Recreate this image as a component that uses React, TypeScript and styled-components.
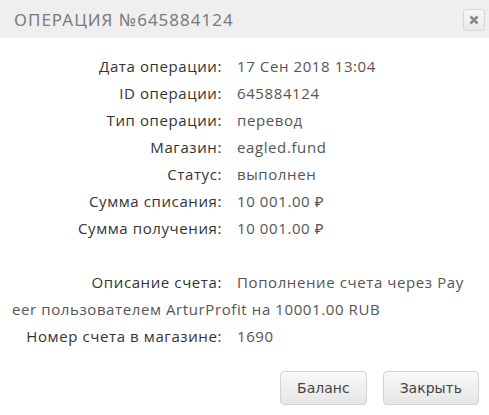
import React from "react";
import styled, { createGlobalStyle } from "styled-components";

const Global = createGlobalStyle`
  html, body { margin: 0; padding: 0; background: #fff; }
  body { font-family: "Open Sans", "Noto Sans", sans-serif; }
`;

const Dialog = styled.div`
  width: 489px;
  height: 415px;
  background: #fff;
  display: flex;
  flex-direction: column;
`;

const Header = styled.div`
  height: 38px;
  background: #efefef;
  display: flex;
  align-items: center;
  justify-content: space-between;
  padding: 0 4px 0 14px;
  box-sizing: border-box;
`;

const Title = styled.div`
  font-family: "Noto Sans", "Open Sans", sans-serif;
  font-size: 17px;
  letter-spacing: 1px;
  color: #7b7b7b;
  text-transform: uppercase;
`;

const CloseBtn = styled.button`
  width: 22px;
  height: 22px;
  margin-top: 1px;
  border: 1px solid #d6d6d6;
  border-radius: 3px;
  background: linear-gradient(#f7f7f7, #e9e9e9);
  display: flex;
  align-items: center;
  justify-content: center;
  padding: 0;
`;

const Body = styled.div`
  padding: 15px 0 0 12px;
  font-size: 15px;
  letter-spacing: 0.6px;
  line-height: 27px;
  color: #444;
`;

const Row = styled.div`
  white-space: nowrap;
`;

const WrapRow = styled.div``;

const Label = styled.span`
  display: inline-block;
  width: 210px;
  text-align: right;
  color: #333;
  margin-right: 15px;
`;

const Value = styled.span`
  color: #555;
`;

const Spacer = styled.div`
  height: 27px;
`;

const Footer = styled.div`
  display: flex;
  justify-content: flex-end;
  gap: 16px;
  padding: 21px 10px 0 0;
`;

const Button = styled.button`
  font-family: "DejaVu Sans", Verdana, sans-serif;
  font-size: 14px;
  color: #454545;
  height: 34px;
  padding: 0 16px;
  border: 1px solid #d3d3d3;
  border-radius: 4px;
  background: linear-gradient(#f8f8f8, #e6e6e6);
`;

const rows: [string, string][] = [
  ["Дата операции:", "17 Сен 2018 13:04"],
  ["ID операции:", "645884124"],
  ["Тип операции:", "перевод"],
  ["Магазин:", "eagled.fund"],
  ["Статус:", "выполнен"],
  ["Сумма списания:", "10 001.00 ₽"],
  ["Сумма получения:", "10 001.00 ₽"],
];

export default function App() {
  return (
    <>
      <Global />
      <Dialog>
        <Header>
          <Title>Операция №645884124</Title>
          <CloseBtn aria-label="close">
            <svg width="10" height="10" viewBox="0 0 10 10">
              <path d="M1.5 1.5 L8.5 8.5 M8.5 1.5 L1.5 8.5" stroke="#888" strokeWidth="2.6" />
            </svg>
          </CloseBtn>
        </Header>
        <Body>
          {rows.map(([l, v]) => (
            <Row key={l}>
              <Label>{l}</Label>
              <Value>{v}</Value>
            </Row>
          ))}
          <Spacer />
          <WrapRow>
            <Label>Описание счета:</Label>
            <Value>
              Пополнение счета через Pay
              <br />
              eer пользователем ArturProfit на 10001.00 RUB
            </Value>
          </WrapRow>
          <Row>
            <Label>Номер счета в магазине:</Label>
            <Value>1690</Value>
          </Row>
        </Body>
        <Footer>
          <Button>Баланс</Button>
          <Button>Закрыть</Button>
        </Footer>
      </Dialog>
    </>
  );
}
